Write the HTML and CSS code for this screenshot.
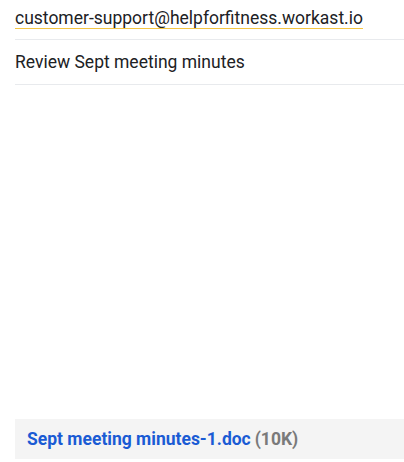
FILE: index.html
```html
<!DOCTYPE html>
<html>
<head>
<meta charset="utf-8">
<link rel="stylesheet" href="styles.css">
</head>
<body>
<div class="page">
  <div class="row row-email"><span class="email">customer-support@helpforfitness.workast.io</span></div>
  <div class="row row-title">Review Sept meeting minutes</div>
  <div class="spacer"></div>
  <div class="attachment"><span class="file">Sept meeting minutes-1.doc</span> <span class="size">(10K)</span></div>
</div>
</body>
</html>
```
FILE: styles.css
```css
html, body { margin: 0; padding: 0; background: #fff; }
body { font-family: Roboto, "Noto Sans", sans-serif; color: #202124; }
.page { height: 462px; padding-left: 15px; display: flex; flex-direction: column; box-sizing: border-box; }
.row { border-bottom: 1px solid #e8eaed; font-size: 17.5px; line-height: 21px; }
.row-email { height: 40px; box-sizing: border-box; padding-top: 8px; line-height: 20px; }
.email { display: inline-block; line-height: 20px; border-bottom: 1px solid #f4c542; }
.row-title { height: 45px; box-sizing: border-box; padding-top: 12px; }
.spacer { flex: 1; }
.attachment { background: #f4f4f4; height: 40px; margin-bottom: 3px; padding-left: 12px; display: flex; align-items: center; font-size: 17.5px; font-weight: bold; }
.file { color: #1a5bd4; }
.size { color: #7a7a7a; margin-left: 4px; }
```
